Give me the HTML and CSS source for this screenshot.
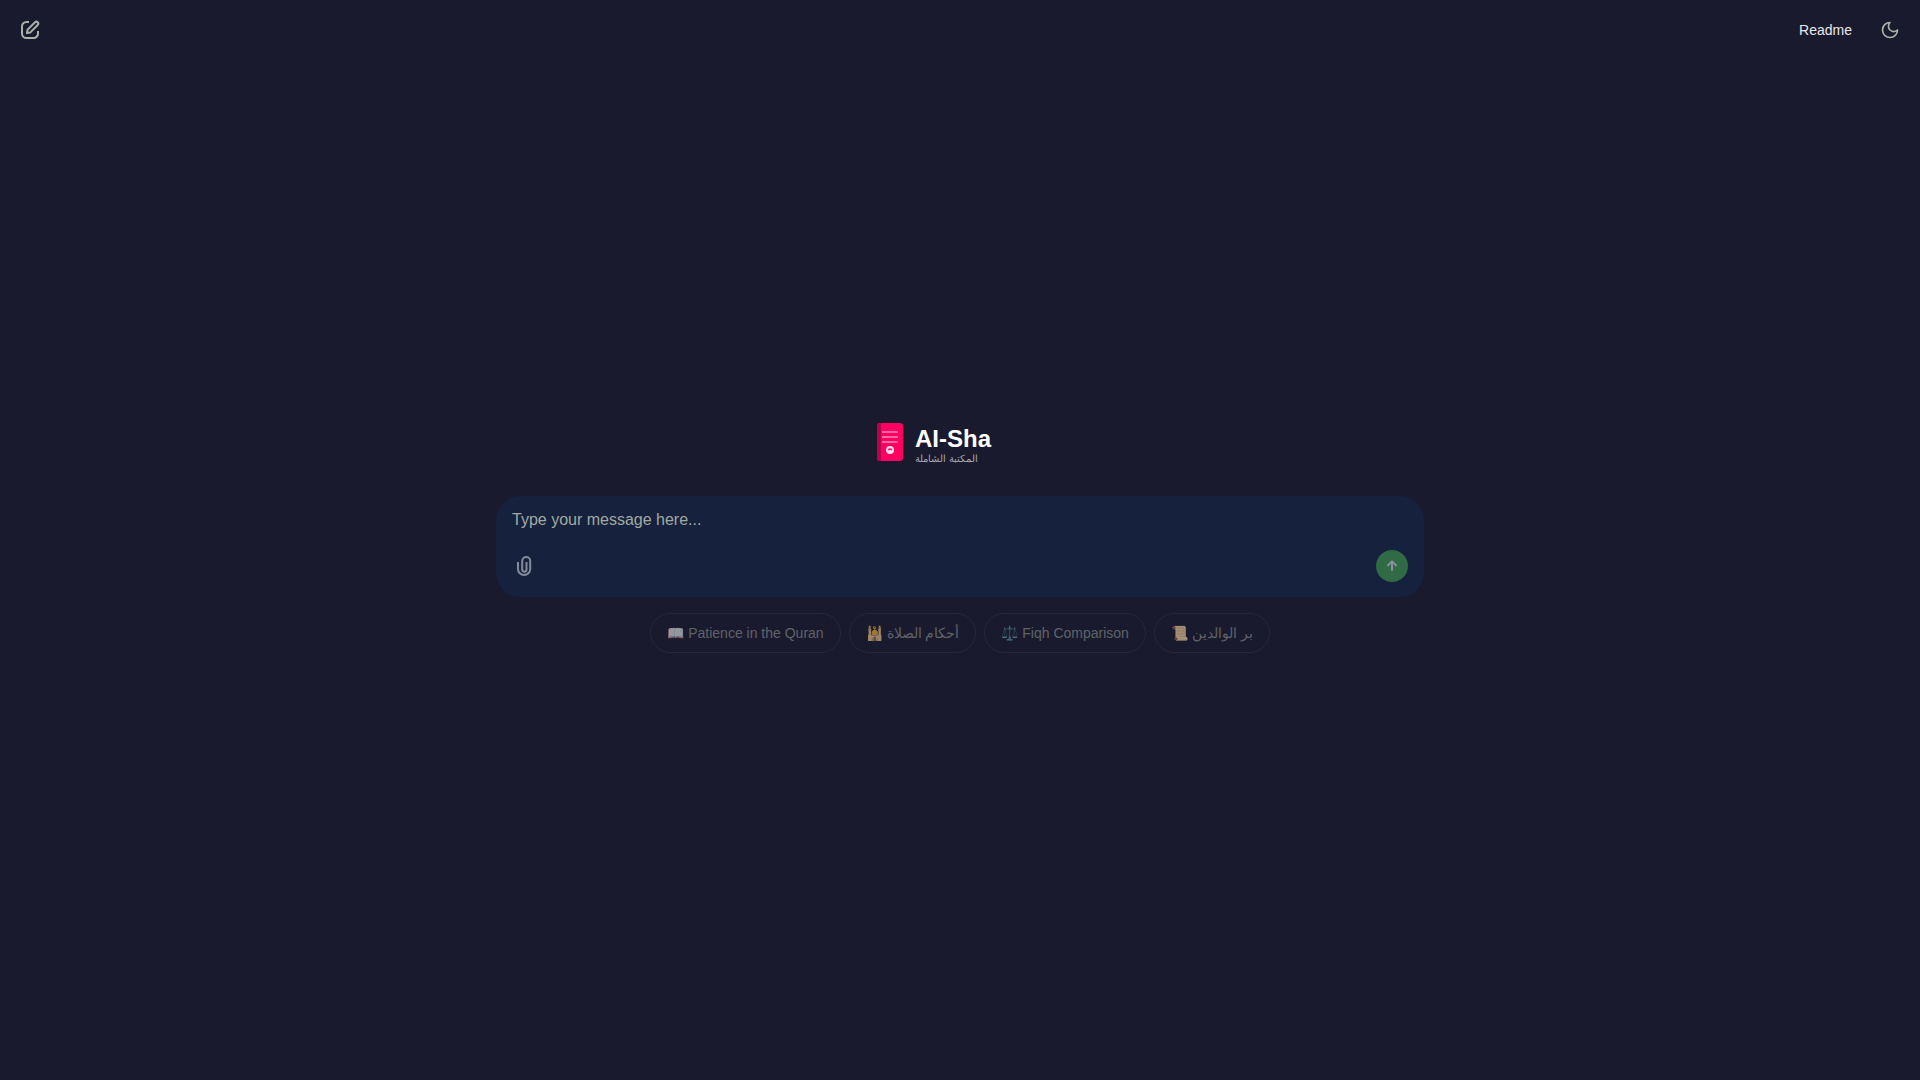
FILE: index.html
```html
<!DOCTYPE html>
<html lang="en">
<head>
<meta charset="utf-8">
<meta name="viewport" content="width=device-width, initial-scale=1">
<title>AI-Sha</title>
<link rel="stylesheet" href="styles.css">
</head>
<body>
<header class="topbar">
  <button class="icon-button" type="button" aria-label="New chat">
    <svg class="icon-large" viewBox="0 0 24 24" fill="none" stroke="currentColor" stroke-width="2" stroke-linejoin="round"><path d="M11 4H8.500A4.500 4.500 0 0 0 4 8.500v7A4.500 4.500 0 0 0 8.500 20h7a4.500 4.500 0 0 0 4.500-4.500V13"/><path d="M9 15l.6-3.400L17 4.300a1.900 1.900 0 0 1 2.700 2.700L12.400 14.400z"/></svg>
  </button>
  <nav class="topbar-actions">
    <button class="readme" type="button">Readme</button>
    <button class="icon-button" type="button" aria-label="Toggle theme">
      <svg class="icon" viewBox="0 0 24 24" fill="none" stroke="currentColor" stroke-width="2" stroke-linecap="round" stroke-linejoin="round"><path d="M12 3a6 6 0 0 0 9 9 9 9 0 1 1-9-9Z"/></svg>
    </button>
  </nav>
</header>
<main class="welcome">
  <div class="logo">
    <svg class="book" viewBox="0 0 26 38" aria-hidden="true"><rect width="26" height="38" rx="3" fill="#ff0062"/><path d="M3 0h1v38H3a3 3 0 0 1-3-3V3a3 3 0 0 1 3-3z" fill="#b8004d"/><path d="M5 9h16M5 14h16M5 19h16" stroke="#ff66a1" stroke-width="2"/><circle cx="13" cy="27" r="4" fill="#ffe0ec"/><path d="M11 27q2-2 4 0" fill="none" stroke="#ff0062" stroke-width="1.200"/></svg>
    <div class="logo-text">
      <h1 class="logo-name">AI-Sha</h1>
      <p class="logo-sub" lang="ar">المكتبة الشاملة</p>
    </div>
  </div>
  <form class="composer">
    <textarea class="message" rows="1" placeholder="Type your message here..." aria-label="Message"></textarea>
    <div class="composer-actions">
      <button class="attach" type="button" aria-label="Attach files">
        <svg class="icon-large" viewBox="0 0 24 24" fill="none" stroke="currentColor" stroke-width="2"><path d="M6 8v6.900a6.100 6.100 0 0 0 12.200 0V7a4 4 0 0 0-8 0v8.500a2.150 2.150 0 0 0 4.300 0V8"/></svg>
      </button>
      <button class="send" type="button" aria-label="Send message">
        <svg class="icon" viewBox="0 0 24 24" fill="none" stroke="currentColor" stroke-width="3" stroke-linecap="round" stroke-linejoin="round"><path d="M12 18V6M6 11l6-6 6 6"/></svg>
      </button>
    </div>
  </form>
  <div class="starters">
    <button class="starter" type="button">📖 Patience in the Quran</button>
    <button class="starter" type="button">🕌 أحكام الصلاة</button>
    <button class="starter" type="button">⚖️ Fiqh Comparison</button>
    <button class="starter" type="button">📜 بر الوالدين</button>
  </div>
</main>
</body>
</html>
```

FILE: styles.css
```css
* {
  box-sizing: border-box;
}

body {
  margin: 0;
  min-height: 100vh;
  display: flex;
  flex-direction: column;
  background: #1a1a2e;
  color: #e8e8e8;
  font-family: "Liberation Sans", Arial, sans-serif;
  font-size: 14px;
}

button {
  padding: 0;
  border: 0;
  background: none;
  color: inherit;
  font: inherit;
  cursor: pointer;
}

.topbar {
  display: flex;
  align-items: center;
  justify-content: space-between;
  height: 60px;
  padding: 0 10px;
}

.topbar-actions {
  display: flex;
  align-items: center;
}

.icon-button {
  display: grid;
  place-items: center;
  width: 40px;
  height: 40px;
  color: #a8b2a8;
}

.icon {
  width: 20px;
  height: 20px;
}

.icon-large {
  width: 24px;
  height: 24px;
}

.readme {
  height: 36px;
  padding: 0 18px;
}

.welcome {
  flex: 1;
  display: flex;
  flex-direction: column;
  align-items: center;
  justify-content: center;
  padding: 0 16px 64px;
}

.logo {
  display: flex;
  gap: 12px;
  width: 166px;
  margin-bottom: 32px;
}

.book {
  width: 26px;
  height: 38px;
}

.logo-text {
  height: 41px;
}

.logo-name {
  margin: 0;
  color: #fff;
  font-size: 24px;
  line-height: 32px;
}

.logo-sub {
  margin: 0;
  color: #a9a9b0;
  font-size: 10px;
  line-height: 8px;
}

.composer {
  width: 100%;
  max-width: 928px;
  padding: 12px 16px 15px;
  border-radius: 24px;
  background: #16213e;
}

.message {
  display: block;
  width: 100%;
  height: 24px;
  padding: 0;
  border: 0;
  outline: 0;
  resize: none;
  background: none;
  color: #e8e8e8;
  font: 16px/24px "Liberation Sans", Arial, sans-serif;
}

.message::placeholder {
  color: #a0aaa0;
}

.composer-actions {
  display: flex;
  align-items: center;
  justify-content: space-between;
  margin-top: 18px;
}

.attach {
  display: grid;
  place-items: center;
  width: 24px;
  height: 32px;
  color: #838a9a;
}

.send {
  display: grid;
  place-items: center;
  width: 32px;
  height: 32px;
  border-radius: 50%;
  background: #316b45;
  color: #8b90a0;
}

.send .icon {
  width: 16px;
  height: 16px;
}

.starters {
  display: flex;
  flex-wrap: wrap;
  justify-content: center;
  gap: 8px;
  margin-top: 16px;
}

.starter {
  height: 40px;
  padding: 0 16px;
  border: 1px solid #303044;
  border-radius: 20px;
  color: #8c938e;
  opacity: 0.6;
}
```
